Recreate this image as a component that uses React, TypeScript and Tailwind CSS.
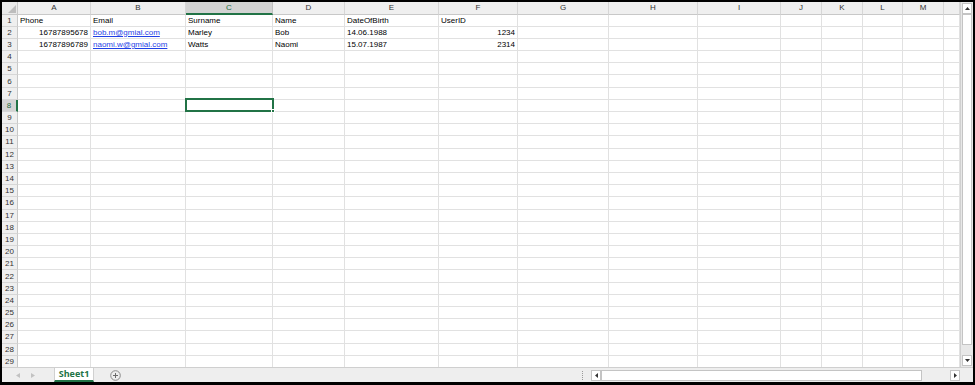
import React from "react";

const cols = ["A","B","C","D","E","F","G","H","I","J","K","L","M",""];
const widths = [73,95,87,72,94,79,91,89,83,41,41,40,41,16];

type Cell = { t: string; align?: "r" | "l"; link?: boolean };
const data: Record<number, Cell[]> = {
  1: [{ t: "Phone" }, { t: "Email" }, { t: "Surname" }, { t: "Name" }, { t: "DateOfBirth" }, { t: "UserID" }],
  2: [{ t: "16787895678", align: "r" }, { t: "bob.m@gmial.com", link: true }, { t: "Marley" }, { t: "Bob" }, { t: "14.06.1988" }, { t: "1234", align: "r" }],
  3: [{ t: "16787896789", align: "r" }, { t: "naomi.w@gmial.com", link: true }, { t: "Watts" }, { t: "Naomi" }, { t: "15.07.1987" }, { t: "2314", align: "r" }],
};

export default function App() {
  const rows = Array.from({ length: 29 }, (_, i) => i + 1);
  return (
    <div className="w-[975px] h-[385px] bg-black pt-[2px] px-[2px] pb-[3px] flex flex-col" style={{ fontFamily: '"Liberation Sans", Arial, sans-serif' }}>
      <div className="flex-1 flex flex-col bg-white overflow-hidden">
        <div className="flex flex-1 min-h-0">
          <div className="relative w-[958px] overflow-hidden">
            <div className="grid grid-cols-[16px_73px_95px_87px_72px_94px_79px_91px_89px_83px_41px_41px_40px_41px_16px] grid-rows-[12.5px_repeat(29,12.2px)] text-[8px] leading-none">
              {/* header row */}
              <div className="bg-[#e9e9e9] border-r border-b border-[#c8c8c8] relative">
                <svg className="absolute right-[1px] bottom-[1px]" width="8" height="8" viewBox="0 0 8 8"><path d="M8 0 L8 8 L0 8 Z" fill="#bdbdbd" /></svg>
              </div>
              {cols.map((c, i) => (
                <div key={"h" + i} className={`flex items-center justify-center border-r pt-[1px] ${c === "C" ? "bg-[#d3d3d3] text-[#1e6b3f] border-b-2 border-b-[#217346] border-r-[#c0c0c0]" : "bg-[#efefef] text-[#333] border-b border-b-[#c8c8c8] border-r-[#d6d6d6]"}`}>
                  {c}
                </div>
              ))}
              {rows.map((r) => (
                <React.Fragment key={r}>
                  <div className={`flex items-center justify-center pt-[1px] ${r === 8 ? "bg-[#d3d3d3] text-[#1e6b3f] border-r-2 border-r-[#217346]" : "bg-[#efefef] text-[#333] border-r border-r-[#c8c8c8]"} border-b border-b-[#d6d6d6]`}>
                    {r}
                  </div>
                  {widths.map((_, ci) => {
                    const cell = data[r]?.[ci];
                    return (
                      <div key={ci} className={`border-r border-b border-[#e1e1e1] flex items-center px-[2px] pt-[1px] overflow-visible whitespace-nowrap text-black ${cell?.align === "r" ? "justify-end" : "justify-start"}`}>
                        {cell ? (
                          cell.link ? (
                            <span className="text-[#1f3fe6] underline">{cell.t}</span>
                          ) : (
                            <span>{cell.t}</span>
                          )
                        ) : null}
                      </div>
                    );
                  })}
                </React.Fragment>
              ))}
            </div>
            {/* selection box on C8 */}
            <div className="absolute left-[183px] top-[96px] w-[89px] h-[14px] border-2 border-[#217346] pointer-events-none">
              <div className="absolute right-[-3px] bottom-[-3px] w-[4px] h-[4px] bg-[#217346] border border-white" />
            </div>
          </div>
          {/* vertical scrollbar */}
          <div className="w-[13px] bg-[#e8e8e8] flex flex-col items-center pt-[1px] pb-[1px] border-l border-[#d0d0d0]">
            <div className="w-[10px] h-[11px] bg-white border border-[#c4c4c4] flex items-center justify-center">
              <svg width="5" height="3" viewBox="0 0 5 3"><path d="M0 3 L2.5 0 L5 3 Z" fill="#333" /></svg>
            </div>
            <div className="w-[10px] h-[331px] bg-white border border-[#c4c4c4]" />
            <div className="flex-1" />
            <div className="w-[10px] h-[11px] bg-white border border-[#c4c4c4] flex items-center justify-center">
              <svg width="5" height="3" viewBox="0 0 5 3"><path d="M0 0 L5 0 L2.5 3 Z" fill="#333" /></svg>
            </div>
          </div>
        </div>
        {/* bottom bar */}
        <div className="h-[15px] bg-[#eeeeee] border-t border-[#cfcfcf] flex items-stretch text-[8px]">
          <div className="w-[52px] flex items-center gap-[11px] pl-[14px]">
            <svg width="4" height="5" viewBox="0 0 4 5"><path d="M4 0 L0 2.5 L4 5 Z" fill="#c2c2c2" /></svg>
            <svg width="4" height="5" viewBox="0 0 4 5"><path d="M0 0 L4 2.5 L0 5 Z" fill="#c2c2c2" /></svg>
          </div>
          <div className="w-[40px] bg-white flex items-center justify-center font-bold text-[#217346] text-[9px] border-b-2 border-[#217346] border-x border-x-[#d0d0d0]" style={{ fontFamily: '"Open Sans", "Liberation Sans", sans-serif' }}>
            Sheet1
          </div>
          <div className="w-[16px]" />
          <div className="flex items-center">
            <svg width="11" height="11" viewBox="0 0 11 11">
              <circle cx="5.5" cy="5.5" r="4.8" fill="none" stroke="#8a8a8a" strokeWidth="1" />
              <path d="M5.5 3 V8 M3 5.5 H8" stroke="#6a6a6a" strokeWidth="1" />
            </svg>
          </div>
          <div className="flex-1" />
          <div className="flex items-center w-[9px]">
            <div className="h-[9px] border-l border-dotted border-[#9a9a9a]" />
          </div>
          <div className="flex items-center">
            <div className="w-[10px] h-[11px] bg-white border border-[#c4c4c4] flex items-center justify-center">
              <svg width="3" height="5" viewBox="0 0 3 5"><path d="M3 0 L0 2.5 L3 5 Z" fill="#333" /></svg>
            </div>
            <div className="w-[321px] h-[11px] bg-white border border-[#c4c4c4]" />
            <div className="w-[28px]" />
            <div className="w-[10px] h-[11px] bg-white border border-[#c4c4c4] flex items-center justify-center">
              <svg width="3" height="5" viewBox="0 0 3 5"><path d="M0 0 L3 2.5 L0 5 Z" fill="#333" /></svg>
            </div>
          </div>
          <div className="w-[13px]" />
        </div>
      </div>
    </div>
  );
}
